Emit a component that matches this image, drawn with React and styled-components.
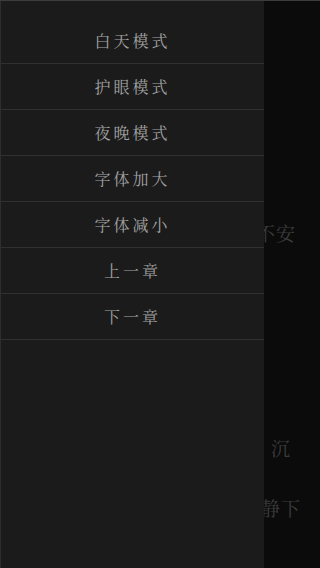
import React from 'react'
import styled, { createGlobalStyle } from 'styled-components';

const GlobalStyle = createGlobalStyle`
  html, body {
    margin: 0;
    padding: 0;
    background: #0b0b0b;
  }
  body {
    font-family: "Noto Serif CJK SC", "Noto Sans CJK SC", "Liberation Serif", serif;
  }
`;

export const Screen = styled.div`
  position: relative;
  width: 320px;
  height: 568px;
  overflow: hidden;
  background: #0b0b0b;
  border-top: 1px solid #3d3d3d;
  box-sizing: border-box;
`;

export const ReaderPage = styled.div`
  display: flex;
  flex-direction: column;
  height: 100%;
`;

export const ReaderLine = styled.div`
  display: flex;
  justify-content: flex-end;
  margin-top: ${p => p.$top}px;
  padding-right: ${p => p.$right}px;
  font-size: 19px;
  line-height: 24px;
  color: #3b3b3b;
  letter-spacing: 1px;
`;

export const Drawer = styled.nav`
  position: absolute;
  top: 0;
  left: 0;
  bottom: 0;
  width: 264px;
  background: #1b1b1b;
  border-left: 1px solid #2e2e2e;
  box-sizing: border-box;
  padding-top: 17px;
  display: flex;
  flex-direction: column;
`;

export const MenuItem = styled.button`
  display: flex;
  align-items: center;
  justify-content: center;
  height: 46px;
  width: 100%;
  padding: 0;
  background: transparent;
  border: none;
  border-bottom: 1px solid #303030;
  color: #a2a2a2;
  font-family: inherit;
  font-size: 16px;
  letter-spacing: 3px;
  cursor: pointer;
`;

function App() {
  const items = ['白天模式', '护眼模式', '夜晚模式', '字体加大', '字体减小', '上一章', '下一章'];

  return (
    <>
      <GlobalStyle />
      <Screen>
        <ReaderPage>
          <ReaderLine $top={220} $right={24}>心中不安</ReaderLine>
          <ReaderLine $top={191} $right={29}>沉</ReaderLine>
          <ReaderLine $top={36} $right={19}>心静下</ReaderLine>
        </ReaderPage>
        <Drawer>
          {items.map((item, index) => (
            <MenuItem key={index}>{item}</MenuItem>
          ))}
        </Drawer>
      </Screen>
    </>
  )
}

export default App
